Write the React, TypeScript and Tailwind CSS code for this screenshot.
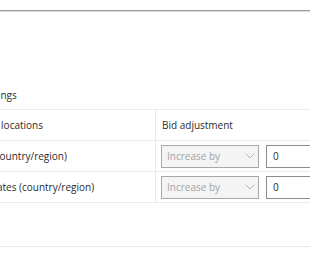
import React from 'react';

// Location bid adjustment table, cropped view
const rows = [
  { name: 'Canada (country/region)' },
  { name: 'United States (country/region)' },
];

const Chevron = () => (
  <svg width="10" height="6" viewBox="0 0 10 6" fill="none" className="shrink-0">
    <path d="M0.5 0.5 L5 5 L9.5 0.5" stroke="#b4b4b4" strokeWidth="1" />
  </svg>
);

const BidSelect = () => (
  <div className="flex items-center justify-between w-[98px] h-[23px] pl-[5px] pr-[3px] bg-[#f4f4f4] border border-[#a8a8a8]">
    <span className="text-[#a3a3a3]">Increase by</span>
    <Chevron />
  </div>
);

const BidInput = () => (
  <div className="flex items-center shrink-0 w-[80px] h-[23px] pl-[6px] bg-white border border-[#8c8c8c] text-[#2b2b2b]">
    0
  </div>
);

export default function App() {
  return (
    <div className="w-[310px] h-[262px] overflow-hidden bg-white text-[10px] text-[#2b2b2b] font-['Open_Sans',sans-serif]">
      {/* Header rule */}
      <div className="mt-[10px] h-px bg-[#9e9e9e]" />
      <div className="h-px bg-[#dadada]" />

      <div className="-ml-[64px] w-[560px]">
        <div className="mt-[76px] h-[14px] pl-[2px] leading-[14px] whitespace-nowrap">Location settings</div>

        <div className="ml-[12px] mt-[7px] border-b border-[#ebebeb]">
          <div className="grid grid-cols-[208px_1fr] h-[31px] border-t border-[#ebebeb]">
            <div className="flex items-center pl-[9px] border-r border-[#ebebeb] whitespace-nowrap">Targeted locations</div>
            <div className="flex items-center pl-[6px] whitespace-nowrap">Bid adjustment</div>
          </div>
          {rows.map((row) => (
            <div key={row.name} className="grid grid-cols-[208px_1fr] h-[31px] border-t border-[#ebebeb]">
              <div className="flex items-center pl-[6px] border-r border-[#ebebeb] whitespace-nowrap">{row.name}</div>
              <div className="flex items-center gap-[7px] pl-[5px]">
                <BidSelect />
                <BidInput />
              </div>
            </div>
          ))}
        </div>
      </div>

      <div className="mt-[43px] h-px bg-[#e8e8e8]" />
    </div>
  );
}
